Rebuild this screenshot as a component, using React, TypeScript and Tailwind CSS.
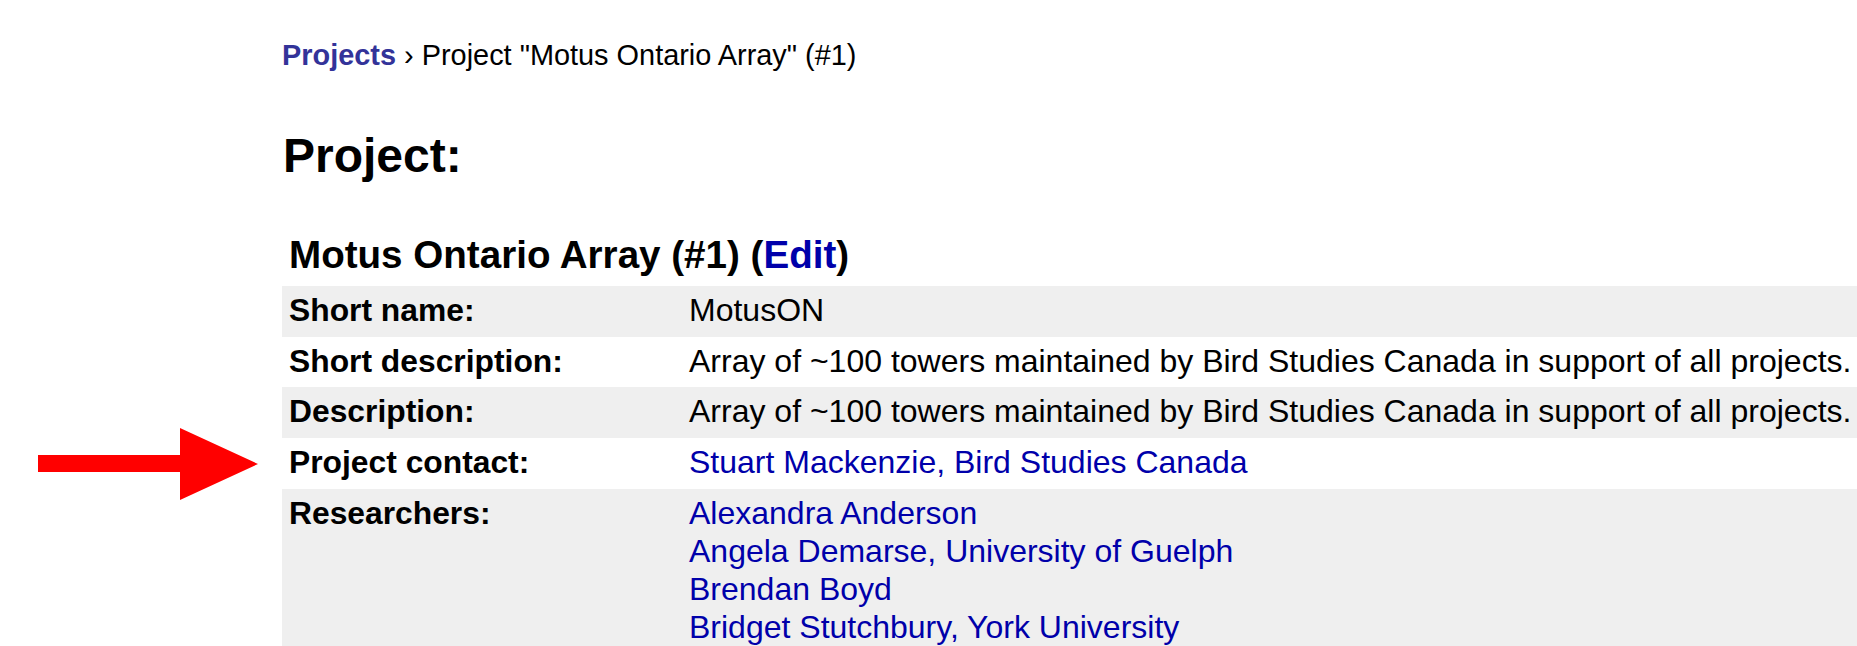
const researchers = [
  'Alexandra Anderson',
  'Angela Demarse, University of Guelph',
  'Brendan Boyd',
  'Bridget Stutchbury, York University',
];

function Row({ label, shaded, children }: { label: string; shaded?: boolean; children: React.ReactNode }) {
  return (
    <div className={`flex w-[1600px] items-start pt-[5px] pb-[7.7px] ${shaded ? 'bg-[#efefef]' : 'bg-white'}`}>
      <div className="w-[407px] shrink-0 pl-[7px] text-[31.8px] font-bold leading-[38px] text-black">{label}</div>
      <div className="whitespace-nowrap text-[32px] leading-[38px] text-black">{children}</div>
    </div>
  );
}

export default function App() {
  return (
    <div className="relative h-[646px] w-full overflow-hidden bg-white font-['Liberation_Sans',Arial,sans-serif]">
      {/* Red arrow annotation */}
      <svg className="absolute left-0 top-0" width="270" height="520" viewBox="0 0 270 520">
        <polygon points="38,455 180,455 180,428 258,464 180,500 180,472 38,472" fill="#ff0000" />
      </svg>

      <div className="ml-[282px] flex flex-col">
        <div className="mt-[39px] text-[28.9px] leading-[33px] text-black">
          <a href="#" className="font-bold text-[#333399]">Projects</a> › Project "Motus Ontario Array" (#1)
        </div>

        <h1 className="mt-[56px] pl-[1px] text-[48px] font-bold leading-[55px] text-black">Project:</h1>

        <div className="mt-[50px] pl-[7px] text-[38.6px] font-bold leading-[44px] text-black">
          Motus Ontario Array (#1) (<a href="#" className="text-[#0000aa]">Edit</a>)
        </div>

        <div className="mt-[9px] flex flex-col">
          <Row label="Short name:" shaded>MotusON</Row>
          <Row label="Short description:">Array of ~100 towers maintained by Bird Studies Canada in support of all projects.</Row>
          <Row label="Description:" shaded>Array of ~100 towers maintained by Bird Studies Canada in support of all projects.</Row>
          <Row label="Project contact:">
            <a href="#" className="text-[#0000aa]">Stuart Mackenzie, Bird Studies Canada</a>
          </Row>
          <Row label="Researchers:" shaded>
            <div className="flex flex-col">
              {researchers.map((r) => (
                <a key={r} href="#" className="text-[#0000aa]">{r}</a>
              ))}
            </div>
          </Row>
        </div>
      </div>
    </div>
  );
}
